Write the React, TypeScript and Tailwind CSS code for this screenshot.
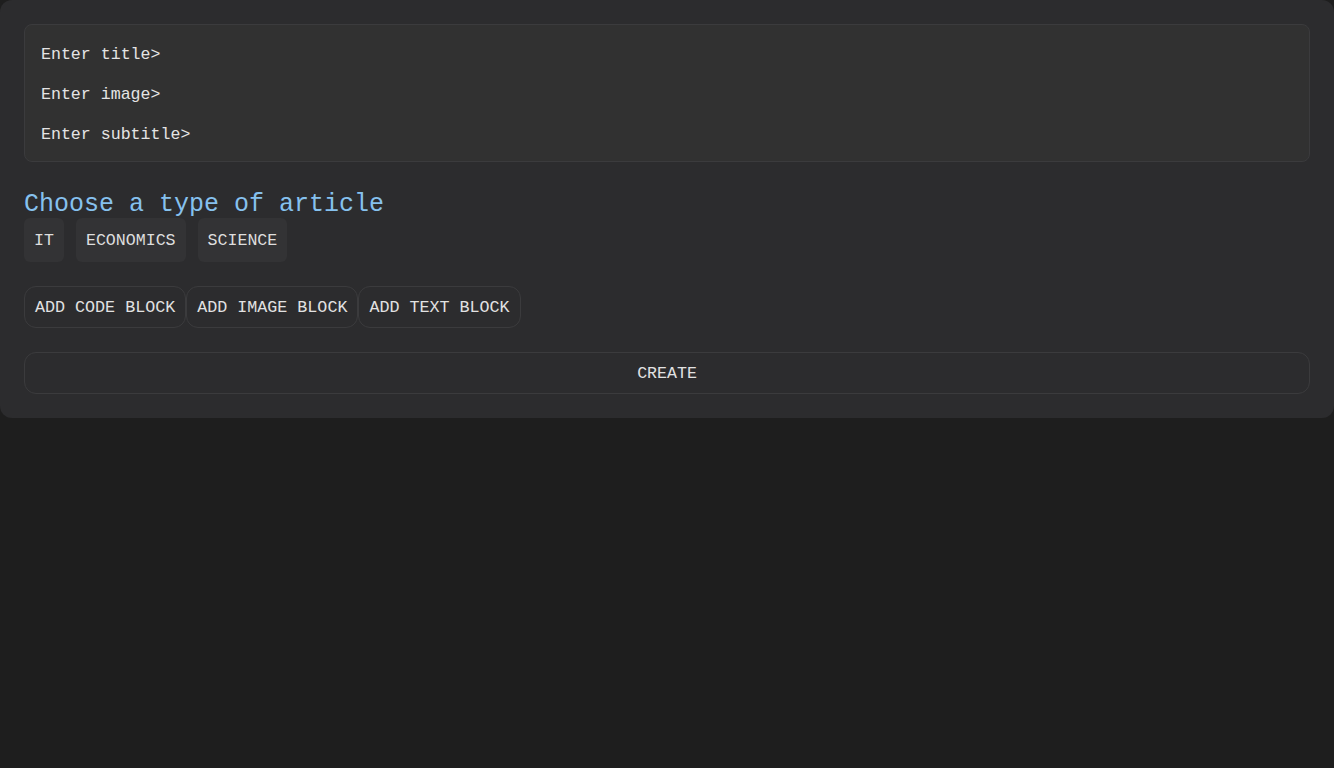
import React from 'react';

const TYPES = ['IT', 'ECONOMICS', 'SCIENCE'];
const BLOCKS = ['ADD CODE BLOCK', 'ADD IMAGE BLOCK', 'ADD TEXT BLOCK'];
const FIELDS = ['Enter title>', 'Enter image>', 'Enter subtitle>'];

const App: React.FC = () => {
  return (
    <div
      className="min-h-screen w-full bg-[#1e1e1e] text-[#e2e2e2]"
      style={{ fontFamily: '"Liberation Mono", "DejaVu Sans Mono", monospace' }}
    >
      <div className="bg-[#2c2c2e] rounded-xl p-6">
        {/* Inputs */}
        <div className="bg-[#313131] border border-[#3b3b3d] rounded-lg px-4 pt-[18px] pb-[14px] flex flex-col gap-4">
          {FIELDS.map(f => (
            <input
              key={f}
              placeholder={f}
              className="bg-transparent outline-none text-[16.6px] leading-6 h-6 placeholder:text-[#e4e4e4] text-[#e4e4e4]"
            />
          ))}
        </div>

        {/* Types */}
        <h2 className="mt-6 pt-[3px] h-8 text-[25px] leading-8 text-[#86c1ee]">Choose a type of article</h2>
        <div className="flex gap-3">
          {TYPES.map(t => (
            <button
              key={t}
              className="bg-[#333335] rounded-md h-11 px-[10px] pt-[2px] text-[16.6px] text-[#dedede]"
            >
              {t}
            </button>
          ))}
        </div>

        {/* Blocks */}
        <div className="flex mt-6">
          {BLOCKS.map(b => (
            <button
              key={b}
              className="border border-[#3b3b3d] rounded-xl h-[42px] px-[10px] pt-[2px] text-[16.7px] text-[#e2e2e2]"
            >
              {b}
            </button>
          ))}
        </div>

        <button className="mt-6 w-full border border-[#3b3b3d] rounded-xl h-[42px] pt-[2px] text-[16.6px] text-[#e2e2e2]">
          CREATE
        </button>
      </div>
    </div>
  );
};

export default App;
